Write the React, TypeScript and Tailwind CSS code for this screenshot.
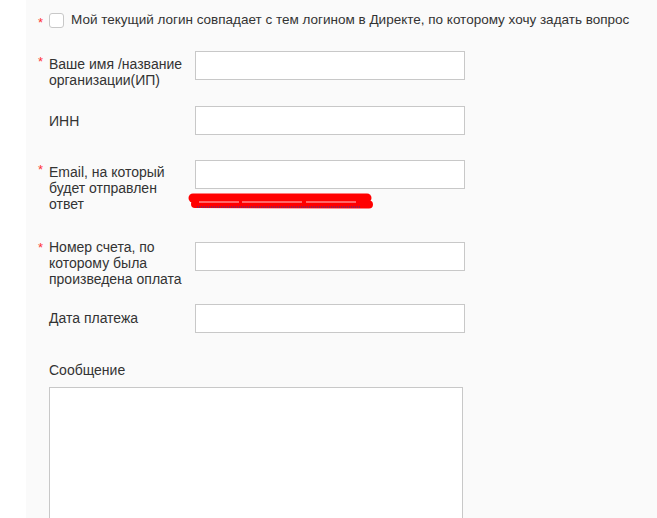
import React from 'react';

interface FieldProps {
  label: React.ReactNode;
  required?: boolean;
  rowClass: string;
  labelPad: string;
  starPad: string;
  inputPad: string;
  children?: React.ReactNode;
}

const Field: React.FC<FieldProps> = ({ label, required, rowClass, labelPad, starPad, inputPad, children }) => (
  <div className={`flex items-start ${rowClass}`}>
    <span className={`w-[11px] shrink-0 text-[13px] leading-4 text-[#f33] ${starPad}`}>{required ? '*' : ''}</span>
    <label className={`w-[146px] shrink-0 text-[14px] leading-4 text-[#333] ${labelPad}`}>{label}</label>
    <div className={`flex flex-col ${inputPad}`}>
      <input type="text" className="w-[270px] h-[29px] border border-[#c8c8c8] bg-white outline-none" />
      {children}
    </div>
  </div>
);

// redacted link under the email field
const Scribble = () => (
  <svg width="186" height="18" viewBox="0 0 186 18" className="mt-[3px] -ml-[8px]">
    <path d="M6 6 L180 6" stroke="#ff0000" strokeWidth="9" strokeLinecap="round" />
    <path d="M8 12 L182 12.5" stroke="#ff0000" strokeWidth="8" strokeLinecap="round" />
    <path d="M12 10 L176 10" stroke="#ffffff" strokeWidth="0.8" strokeDasharray="40 3 60 4 50" />
    <path d="M10 15 L174 15" stroke="#1a3fb0" strokeWidth="1" strokeDasharray="1 1" />
  </svg>
);

const App: React.FC = () => {
  return (
    <div className="h-[518px] overflow-hidden bg-white pl-[26px] font-['Liberation_Sans',Arial,sans-serif]">
      <div className="h-full bg-[#fafafa] pl-[12px] pt-[12px]">
        <div className="flex items-start h-4">
          <span className="w-[11px] shrink-0 text-[13px] leading-4 text-[#f33] pt-[3px]">*</span>
          <span className="mt-[1px] w-[15px] h-[15px] shrink-0 rounded-[3px] border border-[#c8c8c8] bg-white" />
          <span className="ml-[7px] text-[13.5px] leading-4 text-[#333] whitespace-nowrap">
            Мой текущий логин совпадает с тем логином в Директе, по которому хочу задать вопрос
          </span>
        </div>

        <Field
          required
          rowClass="mt-[23px]"
          starPad="pt-[3px]"
          labelPad="pt-[5px]"
          inputPad=""
          label={<>Ваше имя /название<br />организации(ИП)</>}
        />

        <Field rowClass="mt-[18px]" starPad="" labelPad="pt-[7px]" inputPad="" label="ИНН" />

        <Field
          required
          rowClass="mt-[25px]"
          starPad="pt-[2px]"
          labelPad="pt-[4px]"
          inputPad=""
          label={<>Email, на который<br />будет отправлен<br />ответ</>}
        >
          <Scribble />
        </Field>

        <Field
          required
          rowClass="mt-[27px]"
          starPad="pt-[1px]"
          labelPad=""
          inputPad="pt-[3px]"
          label={<>Номер счета, по<br />которому была<br />произведена оплата</>}
        />

        <Field rowClass="mt-[17px]" starPad="" labelPad="pt-[6px]" inputPad="" label="Дата платежа" />

        <div className="pl-[11px] mt-[29px] text-[14px] leading-4 text-[#333]">Сообщение</div>
        <div className="pl-[11px] mt-[9px]">
          <textarea className="block w-[414px] h-[150px] resize-none border border-[#c8c8c8] bg-white outline-none" />
        </div>
      </div>
    </div>
  );
};

export default App;
